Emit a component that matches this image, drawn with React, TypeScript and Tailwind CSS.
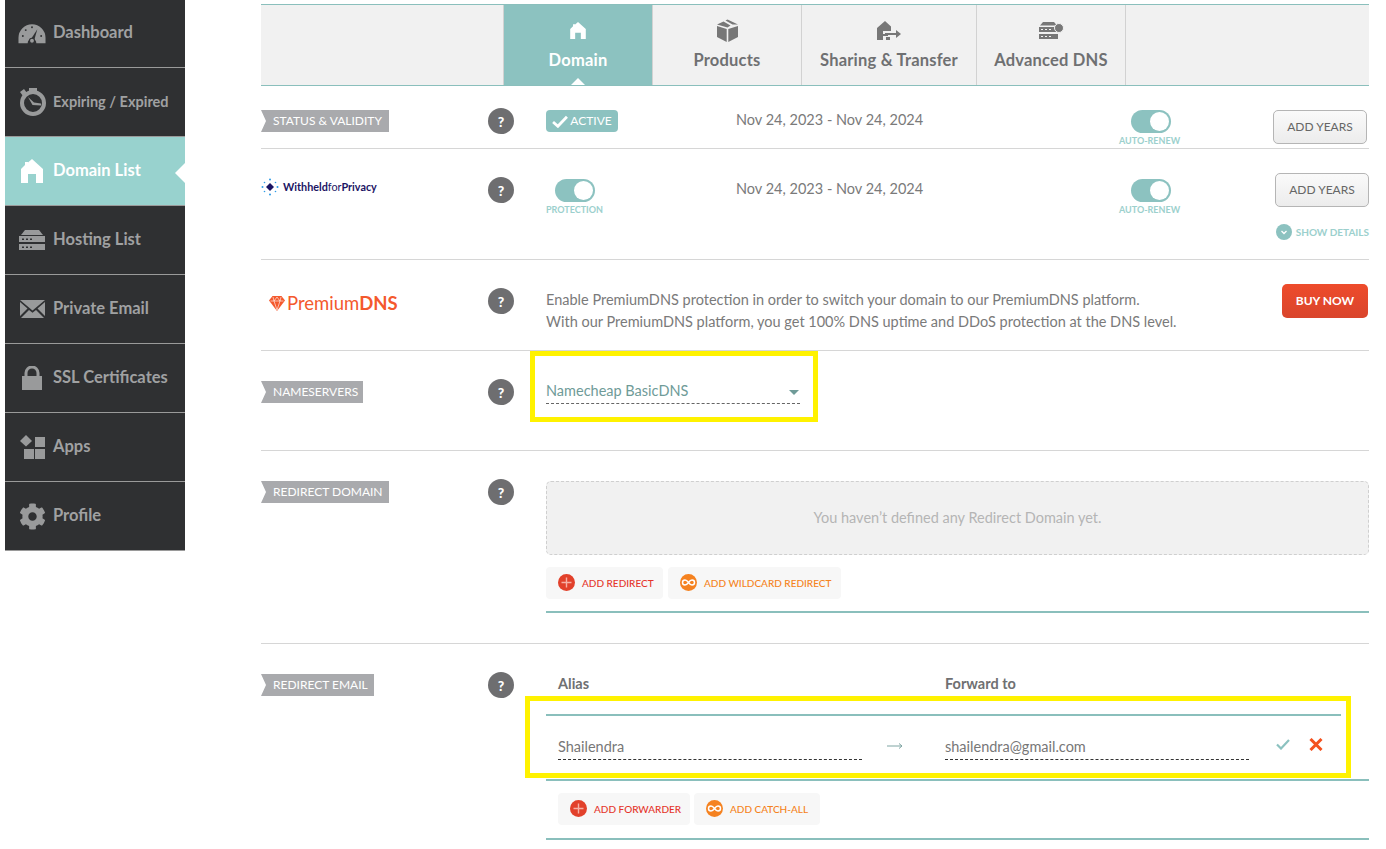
import React from "react";
import { FaCog } from "react-icons/fa";

const G = "#999a9b";

const IconGauge = () => (
  <svg width="29" height="21" viewBox="0 0 29 21">
    <path d="M0.5 20.5V15A14 14 0 0 1 28.5 15V20.5H19A4.5 4.5 0 0 0 10 20.5Z" fill={G} />
    <path d="M13 17L20 6L16.5 18.5Z" fill="#2f3032" />
    <circle cx="14.5" cy="18" r="2.6" fill={G} stroke="#2f3032" strokeWidth="1.2" />
    <g fill="#2f3032">
      <circle cx="5" cy="13" r="1" /><circle cx="8" cy="7" r="1" /><circle cx="14.5" cy="4" r="1" /><circle cx="24" cy="13" r="1" />
    </g>
  </svg>
);
const IconWatch = () => (
  <svg width="27" height="28" viewBox="0 0 27 28">
    <circle cx="14" cy="15" r="11" fill="none" stroke={G} strokeWidth="4" />
    <path d="M10 0H18V3H10Z M1 4L5 1L8 5L4 8Z" fill={G} />
    <path d="M9 9L15 14.5L22 15.5V17.5L13.5 17Z" fill={G} />
  </svg>
);
const IconHouse = ({ c = "#fff", w = 22, h = 24 }: { c?: string; w?: number; h?: number }) => (
  <svg width={w} height={h} viewBox="0 0 22 24">
    <path d="M0 10L4 6V3H7V3.5L11 0L22 10V24H15V15H7V24H0Z" fill={c} />
  </svg>
);
const IconServer = () => (
  <svg width="26" height="20" viewBox="0 0 26 20">
    <path d="M6 0H20L24 5H2Z" fill={G} />
    <path d="M0 6H26V12H0Z M0 14H26V20H0Z" fill={G} />
    <path d="M3 8.5h2v1.5h-2z M7 8.5h2v1.5h-2z M11 8.5h2v1.5h-2z M3 16.5h2v1.5h-2z M7 16.5h2v1.5h-2z M11 16.5h2v1.5h-2z" fill="#2f3032" />
  </svg>
);
const IconMail = () => (
  <svg width="25" height="18" viewBox="0 0 25 18">
    <path d="M0 0H25L12.5 10.5Z M0 2L7.5 8.5L0 16Z M25 2L17.5 8.5L25 16Z M9 10L12.5 12.8L16 10L24 18H1Z" fill={G} />
  </svg>
);
const IconLock = () => (
  <svg width="20" height="24" viewBox="0 0 20 24">
    <path d="M4 10V7A6 6 0 0 1 16 7V10" fill="none" stroke={G} strokeWidth="3" />
    <rect x="0" y="10" width="20" height="14" fill={G} />
  </svg>
);
const IconApps = () => (
  <svg width="25" height="24" viewBox="0 0 25 24">
    <path d="M6 0L12 6L6 11.500L0 6Z" fill={G} />
    <rect x="15" y="2" width="10" height="10" fill={G} />
    <rect x="4" y="14" width="10" height="10" fill={G} />
    <rect x="15" y="14" width="10" height="10" fill={G} />
  </svg>
);
const IconBox = () => (
  <svg width="21" height="23" viewBox="0 0 21 23" fill="#777">
    <path d="M0 5.500L6.500 2.500L13.500 6.500L10.500 8.500Z M8.500 1.500L10.500 0.500L21 5.500L15.500 5.500Z M0 7L9.700 10V23L0 18Z M11.300 10L21 7V18L11.300 23Z" />
  </svg>
);
const IconShare = () => (
  <svg width="24" height="19" viewBox="0 0 24 19" fill="#777">
    <path d="M0 7L8 0L14 5.500V10H6V13H11V15H6V19H0Z" />
    <path d="M8 12H19V9L24 13L19 17V14H8Z" />
    <path d="M9 16H13V19H9Z" />
  </svg>
);
const IconDns = () => (
  <svg width="25" height="17" viewBox="0 0 25 17" fill="#777">
    <path d="M4 0H15L18 3.500H1Z" />
    <path d="M0 5H19V10H0Z M0 12H19V17H0Z" />
    <path d="M2 7h2v1h-2z M6 7h2v1h-2z M10 7h2v1h-2z M2 14h2v1h-2z M6 14h2v1h-2z M10 14h2v1h-2z" fill="#f1f1f1" />
    <circle cx="20" cy="6" r="4.500" stroke="#f1f1f1" strokeWidth="1" />
  </svg>
);

const Nav = ({ icon, label, active, small, first }: { icon: React.ReactNode; label: string; active?: boolean; small?: boolean; first?: boolean }) => (
  <div className={`relative flex items-center border-b border-[#9a9a9a] pl-[13px] ${first ? "h-[68px]" : "h-[69px]"} ${active ? "bg-[#98d2ce] text-white" : "bg-[#2f3032] text-[#a0a1a2]"}`}>
    <div className="flex w-[28px] shrink-0 items-center justify-center">{icon}</div>
    <span className={`ml-[7px] font-bold ${small ? "" : first ? "-mt-[2px]" : "-mt-[2px]"} ${small ? "text-[14.500px]" : "text-[16.500px]"}`}>{label}</span>
    {active && <div className="absolute right-0 top-[26px] h-[20px] w-[10px] bg-white [clip-path:polygon(100%_0,100%_100%,0_50%)]" />}
  </div>
);

const Tab = ({ icon, label, w, active }: { icon: React.ReactNode; label: string; w: string; active?: boolean }) => (
  <div className={`relative flex h-full flex-col items-center border-r border-[#d2d2d2] ${w} ${active ? "bg-[#8cc2c0] text-white" : "text-[#6f7072]"}`}>
    <div className="mt-[5px] flex h-[40px] items-center">{icon}</div>
    <span className="text-[16.500px] font-bold leading-[20px] tracking-[0.2px]">{label}</span>
    {active && <div className="absolute bottom-0 left-1/2 h-[7px] w-[14px] -translate-x-1/2 bg-white [clip-path:polygon(50%_0,100%_100%,0_100%)]" />}
  </div>
);

const Tag = ({ children, w }: { children: React.ReactNode; w: string }) => (
  <div className={`flex h-[22px] items-center bg-[#a9aaad] pl-[12px] text-[12px] text-white [clip-path:polygon(0_0,100%_0,100%_100%,0_100%,5px_50%)] ${w}`}>{children}</div>
);

const Help = ({ mt }: { mt: string }) => (
  <div className={`flex h-[26px] w-[26px] items-center justify-center rounded-full bg-[#6e6e70] text-[14px] font-black text-white ${mt}`}>?</div>
);

const Toggle = ({ label, w, cx }: { label: string; w: string; cx: string }) => (
  <div className={`flex flex-col ${w}`}>
    <div className={`flex h-[23px] w-[40px] items-center justify-end rounded-full bg-[#8cc2c0] pr-[2px] ${cx}`}>
      <div className="h-[19px] w-[19px] rounded-full bg-white" />
    </div>
    <span className="mt-[2px] whitespace-nowrap text-[9px] font-bold leading-[12px] text-[#9cd0cd]">{label}</span>
  </div>
);

const AddYears = () => (
  <div className="flex h-[34px] w-[94px] items-center justify-center rounded-[5px] border border-[#b5b5b5] bg-gradient-to-b from-[#fafafa] to-[#ececec] text-[12px] text-[#666]">ADD YEARS</div>
);

const PlusIcon = () => (
  <svg width="17" height="17" viewBox="0 0 17 17">
    <circle cx="8.500" cy="8.500" r="8.500" fill="#e2412b" />
    <path d="M3.500 7.800H7.800V3.500H9.200V7.800H13.500V9.200H9.200V13.500H7.800V9.200H3.500Z" fill="#f6b0a5" />
  </svg>
);
const LoopIcon = () => (
  <svg width="17" height="17" viewBox="0 0 17 17">
    <circle cx="8.500" cy="8.500" r="8.500" fill="#f58220" />
    <path d="M8.500 8.500C7 6.500 6 6 5 6A2.500 2.500 0 0 0 5 11C6 11 7 10.500 8.500 8.500C10 6.500 11 6 12 6A2.500 2.500 0 0 1 12 11C11 11 10 10.500 8.500 8.500Z" fill="none" stroke="#fff" strokeWidth="1.500" />
  </svg>
);

const AddBtn = ({ kind, label, w }: { kind: "plus" | "loop"; label: string; w: string }) => (
  <div className={`flex h-[32px] items-center rounded-[4px] bg-[#f7f7f7] pl-[12px] ${w}`}>
    <div className="-mt-[1px]">{kind === "plus" ? <PlusIcon /> : <LoopIcon />}</div>
    <span className={`ml-[7px] mt-[1px] whitespace-nowrap text-[10px] font-medium ${kind === "plus" ? "text-[#e5352b]" : "text-[#f58220]"}`}>{label}</span>
  </div>
);

const Row = ({ h, border = true, children }: { h: string; border?: boolean; children: React.ReactNode }) => (
  <div className={`flex ${h} ${border ? "border-b border-[#d6d6d6]" : ""}`}>{children}</div>
);

const DATES = "Nov 24, 2023 - Nov 24, 2024";

export default function App() {
  return (
    <div className="flex h-[849px] w-[1386px] overflow-hidden bg-white font-['Lato',sans-serif] text-[#7a7a7a]">
      <aside className="ml-[5px] h-[551px] w-[180px] shrink-0">
        <Nav first icon={<IconGauge />} label="Dashboard" />
        <Nav icon={<IconWatch />} label="Expiring / Expired" small />
        <Nav active icon={<IconHouse />} label="Domain List" />
        <Nav icon={<IconServer />} label="Hosting List" />
        <Nav icon={<IconMail />} label="Private Email" />
        <Nav icon={<IconLock />} label="SSL Certificates" />
        <Nav icon={<IconApps />} label="Apps" />
        <Nav icon={<FaCog size={27} color={G} />} label="Profile" />
      </aside>

      <main className="ml-[76px] w-[1108px] shrink-0">
        <div className="mt-[4px] flex h-[82px] border-y border-[#8abfbc] bg-[#f1f1f1]">
          <div className="w-[243px] border-r border-[#d2d2d2]" />
          <Tab active w="w-[149px]" icon={<IconHouse w={16} h={17} />} label="Domain" />
          <Tab w="w-[149px]" icon={<IconBox />} label="Products" />
          <Tab w="w-[175px]" icon={<IconShare />} label="Sharing & Transfer" />
          <Tab w="w-[149px]" icon={<IconDns />} label="Advanced DNS" />
        </div>

        <Row h="h-[63px]">
          <div className="w-[227px] pt-[24px]"><Tag w="w-[128px]">STATUS &amp; VALIDITY</Tag></div>
          <div className="w-[58px]"><Help mt="mt-[22px]" /></div>
          <div className="w-[190px] pt-[24px]">
            <div className="flex h-[22px] w-[72px] items-center justify-center gap-[2px] rounded-[4px] bg-[#8cc2c0] text-[12px] text-white">
              <svg width="16" height="13" viewBox="0 0 15 12"><path d="M1 6.500L5.500 10.500L14 1.500" fill="none" stroke="#fff" strokeWidth="2.600" /></svg>
              ACTIVE
            </div>
          </div>
          <div className="w-[383px] pt-[24px] text-[14.500px] leading-[20px]">{DATES}</div>
          <div className="pt-[24px]"><Toggle label="AUTO-RENEW" w="w-[60px]" cx="ml-[12px]" /></div>
          <div className="ml-[94px] pt-[24px]"><AddYears /></div>
        </Row>

        <Row h="h-[111px]">
          <div className="w-[227px] pt-[29px]">
            <div className="flex items-center">
              <svg width="18" height="18" viewBox="0 0 18 18">
                <path d="M9 5L13 9L9 13L5 9Z" fill="#1b1464" />
                <g fill="#2e9be6">
                  <circle cx="1.500" cy="9" r="1" /><circle cx="16.500" cy="9" r="1" /><circle cx="9" cy="1.500" r="1" /><circle cx="9" cy="16.500" r="1" />
                  <circle cx="3.500" cy="4.500" r="0.800" /><circle cx="14.500" cy="4.500" r="0.800" /><circle cx="3.500" cy="13.500" r="0.800" /><circle cx="14.500" cy="13.500" r="0.800" />
                </g>
              </svg>
              <span className="ml-[4px] text-[10.800px] font-bold text-[#1b1464]">Withheld<span className="font-normal">for</span>Privacy</span>
            </div>
          </div>
          <div className="w-[58px]"><Help mt="mt-[28px]" /></div>
          <div className="w-[190px] pt-[30px]"><Toggle label="PROTECTION" w="w-[60px]" cx="ml-[9px]" /></div>
          <div className="w-[383px] pt-[30px] text-[14.500px] leading-[20px]">{DATES}</div>
          <div className="pt-[30px]"><Toggle label="AUTO-RENEW" w="w-[60px]" cx="ml-[12px]" /></div>
          <div className="ml-[96px] flex flex-col items-end pt-[24px]">
            <AddYears />
            <div className="mt-[17px] flex items-center gap-[4px]">
              <svg width="16" height="16" viewBox="0 0 16 16">
                <circle cx="8" cy="8" r="8" fill="#8cc2c0" />
                <path d="M5.500 7L8 9.500L10.500 7" fill="none" stroke="#fff" strokeWidth="1.300" />
              </svg>
              <span className="whitespace-nowrap text-[10px] font-bold text-[#9cd0cd]">SHOW DETAILS</span>
            </div>
          </div>
        </Row>

        <Row h="h-[91px]">
          <div className="w-[227px] pl-[8px] pt-[30px]">
            <div className="flex items-center text-[#f4592d]">
              <svg width="16" height="15" viewBox="0 0 16 15"><path d="M3.500 0H12.500L16 4.500L8 15L0 4.500Z" fill="#f4592d" /><path d="M1.500 5H14.500M5 5L8 14L11 5M4 1L5 5L8 1L11 5L12 1" fill="none" stroke="#fff" strokeWidth="0.600" /></svg>
              <span className="ml-[2px] text-[18.500px] leading-[26px]">Premium<span className="font-bold">DNS</span></span>
            </div>
          </div>
          <div className="w-[58px]"><Help mt="mt-[28px]" /></div>
          <div className="w-[736px] pt-[29px] text-[14.500px] leading-[22px]">
            <div>Enable PremiumDNS protection in order to switch your domain to our PremiumDNS platform.</div>
            <div>With our PremiumDNS platform, you get 100% DNS uptime and DDoS protection at the DNS level.</div>
          </div>
          <div className="pt-[24px]">
            <div className="flex h-[34px] w-[86px] items-center justify-center rounded-[5px] bg-gradient-to-b from-[#ee4b2b] to-[#d9452c] text-[12px] font-bold text-white">BUY NOW</div>
          </div>
        </Row>

        <Row h="h-[100px]">
          <div className="w-[227px] pt-[30px]"><Tag w="w-[102px]">NAMESERVERS</Tag></div>
          <div className="w-[58px]"><Help mt="mt-[28px]" /></div>
          <div className="-ml-[16px] h-[71px] w-[288px] border-[5px] border-[#fff200] pl-[11px] pt-[25px]">
            <div className="flex h-[23px] w-[254px] items-center justify-between border-b border-dashed border-[#666] pr-[1px] text-[14.500px] text-[#6f9b98]">
              <span className="pb-[3px]">Namecheap BasicDNS</span>
              <div className="h-0 w-0 border-x-[5px] border-t-[5px] border-x-transparent border-t-[#6f9b98]" />
            </div>
          </div>
        </Row>

        <Row h="h-[193px]">
          <div className="w-[227px] pt-[30px]"><Tag w="w-[128px]">REDIRECT DOMAIN</Tag></div>
          <div className="w-[58px]"><Help mt="mt-[28px]" /></div>
          <div className="w-[823px] pt-[30px]">
            <div className="flex h-[74px] items-center justify-center rounded-[5px] border border-dashed border-[#cfcfcf] bg-[#f1f1f1] text-[14.500px] text-[#b5b5b5]">You haven’t defined any Redirect Domain yet.</div>
            <div className="mt-[12px] flex gap-[5px]">
              <AddBtn kind="plus" label="ADD REDIRECT" w="w-[117px]" />
              <AddBtn kind="loop" label="ADD WILDCARD REDIRECT" w="w-[173px]" />
            </div>
            <div className="mt-[12px] h-[2px] bg-[#8abfbc]" />
          </div>
        </Row>

        <Row h="h-[205px]" border={false}>
          <div className="w-[227px] pt-[30px]"><Tag w="w-[113px]">REDIRECT EMAIL</Tag></div>
          <div className="w-[58px]"><Help mt="mt-[28px]" /></div>
          <div className="w-[823px]">
            <div className="flex h-[52px] pt-[30px] text-[14.500px] font-bold leading-[20px] text-[#6f7072]">
              <span className="ml-[12px] w-[387px]">Alias</span>
              <span>Forward to</span>
            </div>
            <div className="-ml-[21px] h-[82px] w-[826px] border-[5px] border-[#fff200]">
              <div className="ml-[16px] mt-[13px] h-[2px] w-[795px] bg-[#8abfbc]" />
              <div className="ml-[28px] mt-[20px] flex items-start text-[14.500px] text-[#777]">
                <div className="h-[24px] w-[304px] border-b border-dashed border-[#333] leading-[21px]">Shailendra</div>
                <div className="flex w-[83px] justify-start pl-[25px] pt-[6px]">
                  <svg width="16" height="8" viewBox="0 0 16 8"><path d="M0 4H15M12 1.500L15 4L12 6.500" fill="none" stroke="#7fa5a3" strokeWidth="1" /></svg>
                </div>
                <div className="h-[24px] w-[304px] border-b border-dashed border-[#333] leading-[21px]">shailendra@gmail.com</div>
                <div className="ml-[27px] pt-[3px]">
                  <svg width="14" height="11" viewBox="0 0 14 11"><path d="M1 5.500L5 9.500L13 1" fill="none" stroke="#8cc2c0" strokeWidth="2.200" /></svg>
                </div>
                <div className="ml-[19px] pt-[2px]">
                  <svg width="14" height="13" viewBox="0 0 14 13"><path d="M1.500 1L12.500 12M12.500 1L1.500 12" fill="none" stroke="#f4511e" strokeWidth="3" /></svg>
                </div>
              </div>
            </div>
            <div className="mt-[1px] h-[2px] bg-[#8abfbc]" />
            <div className="ml-[12px] mt-[12px] flex gap-[4px]">
              <AddBtn kind="plus" label="ADD FORWARDER" w="w-[132px]" />
              <AddBtn kind="loop" label="ADD CATCH-ALL" w="w-[126px]" />
            </div>
            <div className="mt-[13px] h-[2px] bg-[#8abfbc]" />
          </div>
        </Row>
      </main>
    </div>
  );
}
